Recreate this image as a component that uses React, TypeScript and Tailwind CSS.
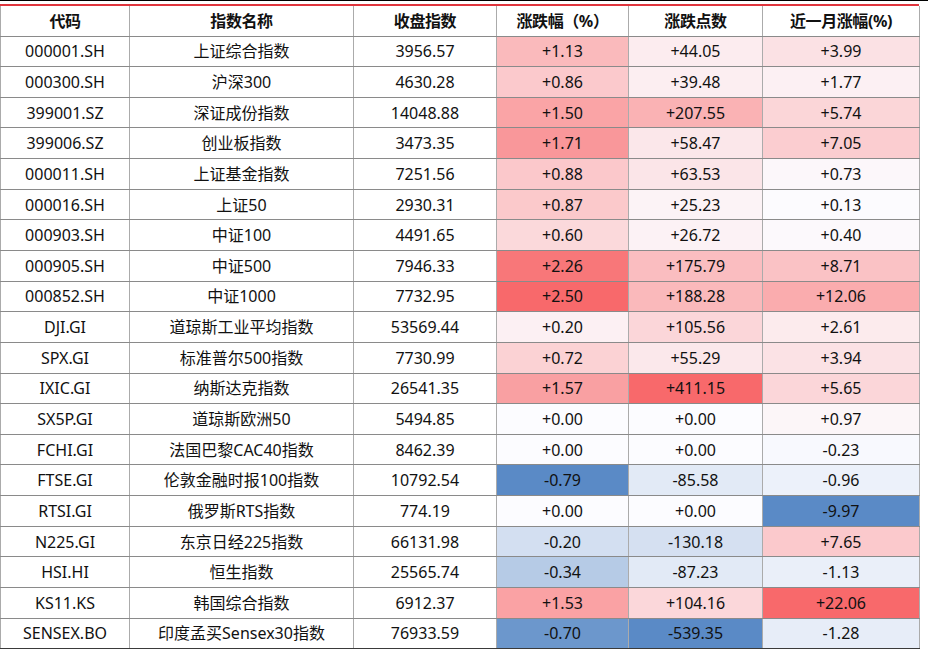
import React from "react";

type Row = [string, string, string, number, number, number];

const ROWS: Row[] = [
  ["000001.SH", "上证综合指数", "3956.57", 1.13, 44.05, 3.99],
  ["000300.SH", "沪深300", "4630.28", 0.86, 39.48, 1.77],
  ["399001.SZ", "深证成份指数", "14048.88", 1.5, 207.55, 5.74],
  ["399006.SZ", "创业板指数", "3473.35", 1.71, 58.47, 7.05],
  ["000011.SH", "上证基金指数", "7251.56", 0.88, 63.53, 0.73],
  ["000016.SH", "上证50", "2930.31", 0.87, 25.23, 0.13],
  ["000903.SH", "中证100", "4491.65", 0.6, 26.72, 0.4],
  ["000905.SH", "中证500", "7946.33", 2.26, 175.79, 8.71],
  ["000852.SH", "中证1000", "7732.95", 2.5, 188.28, 12.06],
  ["DJI.GI", "道琼斯工业平均指数", "53569.44", 0.2, 105.56, 2.61],
  ["SPX.GI", "标准普尔500指数", "7730.99", 0.72, 55.29, 3.94],
  ["IXIC.GI", "纳斯达克指数", "26541.35", 1.57, 411.15, 5.65],
  ["SX5P.GI", "道琼斯欧洲50", "5494.85", 0, 0, 0.97],
  ["FCHI.GI", "法国巴黎CAC40指数", "8462.39", 0, 0, -0.23],
  ["FTSE.GI", "伦敦金融时报100指数", "10792.54", -0.79, -85.58, -0.96],
  ["RTSI.GI", "俄罗斯RTS指数", "774.19", 0, 0, -9.97],
  ["N225.GI", "东京日经225指数", "66131.98", -0.2, -130.18, 7.65],
  ["HSI.HI", "恒生指数", "25565.74", -0.34, -87.23, -1.13],
  ["KS11.KS", "韩国综合指数", "6912.37", 1.53, 104.16, 22.06],
  ["SENSEX.BO", "印度孟买Sensex30指数", "76933.59", -0.7, -539.35, -1.28],
];

// Excel-style three colour scale, midpoint at 0
const WHITE = [252, 252, 255];
const RED = [248, 105, 107];
const BLUE = [90, 138, 198];

function heat(v: number, col: number): string {
  const vals = ROWS.map((r) => r[col] as number);
  const max = Math.max(...vals);
  const min = Math.min(...vals);
  let t = 0;
  let end = WHITE;
  if (v > 0) {
    t = v / max;
    end = RED;
  } else if (v < 0) {
    t = v / min;
    end = BLUE;
  }
  const c = WHITE.map((w, i) => Math.round(w + (end[i] - w) * t));
  return `rgb(${c[0]}, ${c[1]}, ${c[2]})`;
}

function fmt(v: number, digits = 2) {
  return (v < 0 ? "-" : "+") + Math.abs(v).toFixed(digits);
}

const HEADERS = ["代码", "指数名称", "收盘指数", "涨跌幅（%）", "涨跌点数", "近一月涨幅(%)"];

export default function App() {
  return (
    <div
      className="w-[928px] h-[653px] bg-white text-[#111] overflow-hidden"
      style={{ fontFamily: '"Noto Sans", "Noto Sans CJK SC", sans-serif' }}
    >
      <div className="h-px w-full bg-black" />
      <div className="mt-[3px] h-[2px] w-[919px] bg-[#e0353d]" />
      <table className="w-[919px] table-fixed border-collapse text-[16px] leading-none">
        <colgroup>
          <col className="w-[129px]" />
          <col className="w-[224px]" />
          <col className="w-[143px]" />
          <col className="w-[132px]" />
          <col className="w-[134px]" />
          <col className="w-[157px]" />
        </colgroup>
        <thead>
          <tr className="h-[30px]">
            {HEADERS.map((h) => (
              <th
                key={h}
                className="border-x border-b border-x-[#ababab] border-b-[#8a8a8a] p-0 text-center font-bold tracking-tight"
              >
                {h}
              </th>
            ))}
          </tr>
        </thead>
        <tbody>
          {ROWS.map((r, i) => {
            const last = i === ROWS.length - 1;
            const cell = `border-x border-b border-x-[#ababab] p-0 text-center ${
              last ? "border-b-[#3a3a3a]" : "border-b-[#8a8a8a]"
            }`;
            return (
              <tr key={r[0]} className="h-[30.65px]">
                <td className={cell}>{r[0]}</td>
                <td className={cell}>{r[1]}</td>
                <td className={cell}>{r[2]}</td>
                <td className={cell} style={{ backgroundColor: heat(r[3], 3) }}>
                  {fmt(r[3])}
                </td>
                <td className={cell} style={{ backgroundColor: heat(r[4], 4) }}>
                  {fmt(r[4])}
                </td>
                <td className={cell} style={{ backgroundColor: heat(r[5], 5) }}>
                  {fmt(r[5])}
                </td>
              </tr>
            );
          })}
        </tbody>
      </table>
    </div>
  );
}
